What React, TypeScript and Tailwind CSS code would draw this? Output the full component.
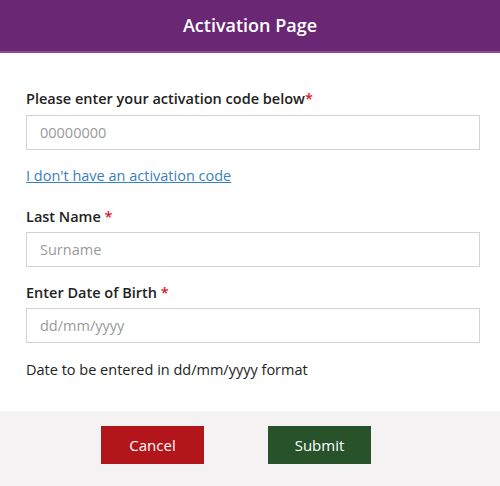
export default function App() {
  return (
    <div className="w-[500px] h-[486px] bg-white flex flex-col font-['Open_Sans',sans-serif] text-[#222]">
      <div className="h-[53px] bg-[#6a2874] border-b-2 border-[#8a4f92] flex items-center justify-center">
        <h1 className="text-white text-[18px] font-semibold">Activation Page</h1>
      </div>
      <div className="flex-1 pl-[26px] pr-[20px] pt-[36px]">
        <label className="block text-[14.5px] font-semibold leading-5">
          Please enter your activation code below<span className="text-[#e0141e]">*</span>
        </label>
        <input
          className="mt-[6px] w-full h-[35px] border border-[#d3d3d3] px-[13px] text-[14.5px] placeholder:text-[#9a9a9a] outline-none"
          placeholder="00000000"
        />
        <a href="#" className="mt-[16px] inline-block text-[14.5px] text-[#3a7fc1] underline leading-5">
          I don't have an activation code
        </a>
        <label className="mt-[20px] block text-[14.5px] font-semibold leading-5">
          Last Name <span className="text-[#e0141e]">*</span>
        </label>
        <input
          className="mt-[5px] w-full h-[35px] border border-[#d3d3d3] px-[13px] text-[14.5px] placeholder:text-[#9a9a9a] outline-none"
          placeholder="Surname"
        />
        <label className="mt-[16px] block text-[14.5px] font-semibold leading-5">
          Enter Date of Birth <span className="text-[#e0141e]">*</span>
        </label>
        <input
          className="mt-[5px] w-full h-[35px] border border-[#d3d3d3] px-[13px] text-[14.5px] placeholder:text-[#9a9a9a] outline-none"
          placeholder="dd/mm/yyyy"
        />
        <p className="mt-[17px] text-[14.5px] leading-5">Date to be entered in dd/mm/yyyy format</p>
      </div>
      <div className="h-[75px] bg-[#f4f2f3] flex items-start pt-[15px] pl-[101px] gap-[64px]">
        <button className="w-[103px] h-[38px] bg-[#b3161a] text-white text-[15px]">Cancel</button>
        <button className="w-[103px] h-[38px] bg-[#28532a] text-white text-[15px]">Submit</button>
      </div>
    </div>
  );
}
